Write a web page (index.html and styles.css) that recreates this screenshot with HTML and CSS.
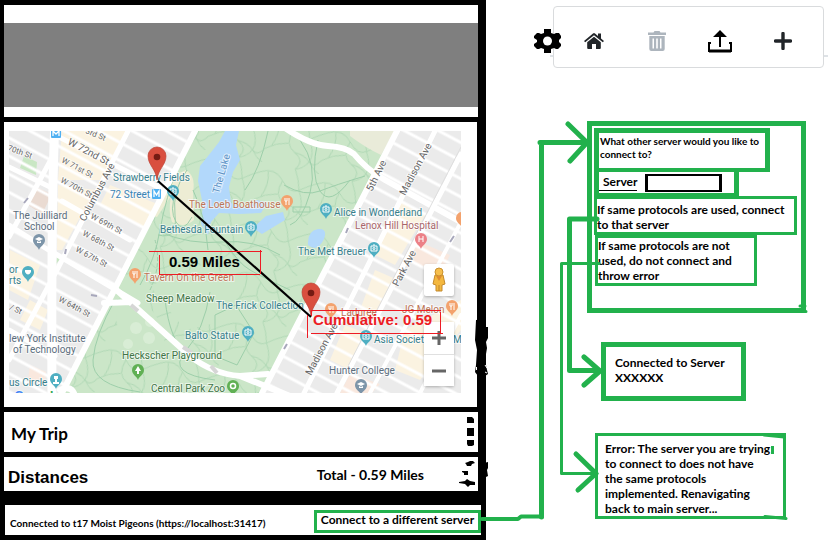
FILE: index.html
```html
<!DOCTYPE html>
<html lang="en">
<head>
<meta charset="utf-8">
<title>Trip planner server flow</title>
<link rel="stylesheet" href="styles.css">
</head>
<body>
<main class="board">
  <section class="phone">
    <header class="banner"></header>

    <div class="map-panel">
      <div class="map">
        <svg class="map-art" viewBox="9 131 452 262" preserveAspectRatio="none" role="img" aria-label="Map of Central Park">
          <defs>
            <pattern id="streets" width="60" height="16" patternUnits="userSpaceOnUse" patternTransform="translate(0 4) rotate(28)">
              <path d="M0 2H60" stroke="#fff" stroke-width="3"/>
            </pattern>
            <pattern id="trails" width="58" height="52" patternUnits="userSpaceOnUse" patternTransform="rotate(12)">
              <path d="M0 10Q14 2 24 14T42 20T58 10M24 14Q18 30 30 36T34 52M34 0Q40 10 42 20Q50 34 46 42T34 52M0 38Q10 30 22 28M30 36Q40 36 46 42T58 38M8 8Q12 20 6 34M46 42Q52 50 58 52" fill="none" stroke="#b0d8b5" stroke-width="1"/>
            </pattern>
            <path id="pin" d="M0 9C-1 5-6 4-6-1A6 6 0 1 1 6-1C6 4 1 5 0 9Z"/>
            <g id="cam" fill="none" stroke="#fff" stroke-width="1"><path d="M-3-2H3V3H-3ZM-1-3H1"/><circle cy=".5" r="1"/></g>
            <path id="fork" d="M-2-4V-1M0-4V-1H-2M-1-1V3M2-4V3" fill="none" stroke="#fff"/>
            <g id="marker">
              <path d="M0 33C-1 22-9 18-9 9A9 9 0 0 1 9 9C9 18 1 22 0 33Z" fill="#d94f3f" stroke="#bd4437" stroke-width=".7"/>
              <circle cy="10" r="3.3" fill="#741b13"/>
            </g>
          </defs>

          <rect x="9" y="131" width="452" height="262" fill="#ebebeb"/>
          <g fill="#fbf3e1">
            <path d="M62 131H126L100 180L58 180ZM58 185L95 190L62 250L57 250ZM110 185L160 205L150 230L100 205ZM30 300L48 310L40 330L20 320ZM10 250L40 265L28 300L9 290ZM400 200L425 215L395 265L375 255ZM375 270L398 280L375 320L358 315ZM345 325L370 335L350 370L330 360ZM405 330L461 300V330L420 380L395 370Z"/>
            <path d="M30 365L46 372L44 386L28 380ZM415 240L450 255L440 275L412 262ZM350 374L380 384L372 393H340Z" fill="#f9e8de"/>
            <path d="M34 186L52 194L42 214L28 205Z" fill="#eadbd2"/>
          </g>
          <path d="M24 156L37 162L36 175L20 168ZM57 256L61 258L56 264Z" fill="#c9e7c4"/>
          <path d="M9 131H461V393H9Z" fill="url(#streets)"/>

          <path d="M195 131H397L262 393H62Z" fill="#cbe6c8"/>
          <path d="M195 131H397L262 393H62Z" fill="url(#trails)"/>
          <path d="M120 298Q160 298 165 345Q155 360 130 350Q110 330 120 298ZM150 286L210 262L240 290L228 320L185 330Z" fill="#cbe6c8"/>
          <g fill="#d8edd5"><circle cx="136" cy="328" r="6"/><circle cx="149" cy="338" r="6"/><circle cx="128" cy="344" r="5"/><circle cx="150" cy="322" r="5"/></g>
          <path d="M350 131H395L381 155Q366 148 350 136Z" fill="#e9ebd9"/>
          <path d="M186 170Q196 176 193 192L194 220Q184 229 172 222Q168 212 171 196L157 217L150 215L168 178Z" fill="#ededd4"/>
          <path d="M225 131H239L236 145L240 160L233 172L229 187L231 203L245 208L257 200L267 203L261 213L239 214L219 213L211 222L208 235L201 224L203 205L198 181L200 166L212 151L219 142ZM253 228L266 216L283 212L285 220L262 234ZM308 245Q307 231 318 229Q328 228 324 239Q317 253 308 245Z" fill="#b2d8fb"/>
          <g fill="none" stroke="#9dcfaa">
            <path d="M180 160Q165 200 160 230T140 285M187 170Q172 190 175 215T158 235M176 193Q169 210 176 222T192 217M193 190Q205 215 208 250M160 232Q190 245 222 242T280 255M268 131Q260 170 245 190M300 140Q318 165 310 193T290 225M318 140Q310 175 320 191T350 180M284 185Q305 197 320 191T365 176M293 207H310V212H293ZM226 243Q238 263 250 270T290 290M115 300Q95 335 93 360T140 392M165 300Q170 340 185 352M210 292Q204 330 185 352T215 380M215 315L236 305L254 333L237 365L215 356Z"/>
            <path d="M191 137L117 288M150 290Q162 265 155 240" stroke-dasharray="4 2"/>
          </g>

          <g fill="none" stroke="#fff" stroke-linecap="round" stroke-linejoin="round">
            <path d="M195 131L62 393M397 131L262 393" stroke-width="6"/>
            <path d="M55 120Q51 210 52 400" stroke-width="9"/>
            <path d="M128 131L58 268L9 360M55 152L9 237M435 131L304 393M461 154L337 393" stroke-width="5"/>
            <path d="M461 222L370 393M461 315L420 393" stroke-width="4"/>
            <path d="M53 134L160 188M9 167L52 188M54 253L138 303M62 201L130 240M9 225L50 251M9 330L55 356" stroke-width="5"/>
            <path d="M285 128Q310 145 328 146T354 154Q366 169 385 180L461 222" stroke-width="6"/>
            <path d="M104 303L133 302M112 286L150 320L190 356Q213 374 240 376L268 374M240 376L290 396M60 390Q70 385 74 393" stroke-width="6"/>
            <path d="M461 147L345 372" stroke="#dedede" stroke-width="1"/>
          </g>
          <path d="M131 305L138 311M183 347L192 353M211 366L217 373" stroke="#d6d6d6" stroke-width="4"/>

          <g class="place" font-size="10">
            <g class="lbl-water">
              <text x="113" y="181">Strawberry Fields</text>
              <text x="160" y="233">Bethesda Fountain</text>
              <text x="334" y="216">Alice in Wonderland</text>
              <text x="298" y="255">The Met Breuer</text>
              <text x="216" y="309">The Frick Collection</text>
              <text x="185" y="339">Balto Statue</text>
              <text x="374" y="343">Asia Societ</text>
              <text x="453" y="343">Mu</text>
              <text x="9" y="273">or</text><text x="9" y="284">rts</text>
              <text x="9" y="386">us Circle</text>
            </g>
            <text class="lbl-metro" x="110" y="198">72 Street</text>
            <text class="lbl-lake" transform="translate(219 194) rotate(-74)">The Lake</text>
            <g class="lbl-food">
              <text x="189" y="208">The Loeb Boathouse</text>
              <text x="144" y="281">Tavern On the Green</text>
              <text x="341" y="316">Ladurée</text>
              <text x="402" y="313">JG Melon</text>
            </g>
            <text class="lbl-health" x="355" y="229">Lenox Hill Hospital</text>
            <g class="lbl-park">
              <text x="146" y="302">Sheep Meadow</text>
              <text x="122" y="359">Heckscher Playground</text>
              <text x="151" y="392">Central Park Zoo</text>
            </g>
            <g class="lbl-school">
              <text x="13" y="219">The Juilliard</text><text x="24" y="230">School</text>
              <text x="9" y="342">lew York Institute</text><text x="13" y="353">of Technology</text>
              <text x="329" y="374">Hunter College</text>
            </g>
            <g class="lbl-street">
              <text transform="translate(67 144) rotate(28)">W 72nd St</text>
              <text transform="translate(85 222) rotate(-62)">Columbus Ave</text>
              <text transform="translate(372 192) rotate(-64)">5th Ave</text>
              <text transform="translate(405 196) rotate(-62)">Madison Ave</text>
              <text transform="translate(398 287) rotate(-62)">Park Ave</text>
              <text transform="translate(311 376) rotate(-62)">Madison Ave</text>
            </g>
            <g class="lbl-street" font-size="8">
              <text transform="translate(85 133) rotate(22)">3rd St</text>
              <text transform="translate(61 162) rotate(28)">W 71st St</text>
              <text transform="translate(60 182) rotate(28)">W 70th St</text>
              <text transform="translate(90 218) rotate(28)">W 69th St</text>
              <text transform="translate(82 235) rotate(28)">W 68th St</text>
              <text transform="translate(75 251) rotate(28)">W 67th St</text>
              <text transform="translate(58 301) rotate(28)">W 64th St</text>
              <text transform="translate(7 150) rotate(20)">70th St</text>
              <text transform="translate(9 309) rotate(25)">/ St</text>
            </g>
            <text class="logo" x="14" y="402" font-size="15"><tspan fill="#4285f4">G</tspan><tspan fill="#ea4335">o</tspan><tspan fill="#fbbc05">o</tspan><tspan fill="#4285f4">g</tspan><tspan fill="#34a853">l</tspan><tspan fill="#ea4335">e</tspan></text>
          </g>

          <g fill="#4fafc2">
            <use href="#pin" x="326" y="210"/><use href="#pin" x="251" y="228"/><use href="#pin" x="374" y="249"/><use href="#pin" x="248" y="333"/><use href="#pin" x="366" y="337"/><use href="#pin" x="28" y="273"/><use href="#pin" x="56" y="380"/><use href="#pin" x="173" y="192"/>
          </g>
          <use href="#cam" x="326" y="209"/><use href="#cam" x="251" y="227"/><use href="#cam" x="374" y="248"/><use href="#cam" x="248" y="332"/><use href="#cam" x="366" y="336"/><use href="#cam" x="173" y="191"/>
          <path d="M25 270H31V272Q28 277 25 272ZM54 376H58V379H57V382H59V384H53V382H55V379H54Z" fill="#fff"/>
          <g fill="#f3a26d"><use href="#pin" x="287" y="202"/><use href="#pin" x="135" y="275"/><use href="#pin" x="331" y="310"/><use href="#pin" x="452" y="307"/><use href="#pin" x="462" y="219"/></g>
          <use href="#fork" x="287" y="202"/><use href="#fork" x="135" y="275"/><use href="#fork" x="331" y="310"/><use href="#fork" x="452" y="307"/>
          <use href="#pin" x="421" y="240" fill="#ec8087"/><path d="M419 236V242M423 236V242M419 239H423" stroke="#fff"/>
          <g fill="#7d95a9"><use href="#pin" x="39" y="241"/><use href="#pin" x="361" y="386"/></g>
          <path d="M35 239L39 237L43 239L39 241ZM37 241L39 242L41 241V243H37ZM357 384L361 382L365 384L361 386ZM359 386L361 387L363 386V388H359Z" fill="#fff"/>
          <g fill="#60b054"><use href="#pin" x="138" y="371"/><use href="#pin" x="233" y="387"/></g>
          <path d="M138 366L141 371H139V374H137V371H135Z" fill="#fff"/>
          <circle cx="233" cy="386" r="2.5" fill="none" stroke="#fff" stroke-width="1.5"/>
          <g fill="#50b1f2"><rect x="152" y="189" width="9" height="10" rx="1"/><rect x="51" y="129" width="10" height="9" rx="1"/></g>
          <path d="M154 197V191L156.500 195L159 191V197M53 136V131L56 134L59 131V136" fill="none" stroke="#fff" stroke-width="1.300"/>
          <path d="M24 203L28 198M65 254L66 249M97 296L91 295M346 233L348 228M284 349L287 344M450 242L454 236" stroke="#a7a7bb" stroke-width="2"/>
        </svg>

        <button class="map-btn pegman" type="button" aria-label="Street View">
          <svg viewBox="0 0 16 26" width="16" height="26"><path d="M4 8H12L14 17L11 18V24H5V18L2 17Z" fill="#f4b83f" stroke="#c58a2c"/><circle cx="8" cy="5" r="4" fill="#f6be4c" stroke="#c9902f"/><path d="M5 9L8 14L11 9Z" fill="#df8d32"/><path d="M8 18V24" stroke="#bd852c"/></svg>
        </button>
        <div class="zoom">
          <button class="map-btn" type="button" aria-label="Zoom in"><svg viewBox="0 0 14 14" width="14" height="14"><path d="M0 7H14M7 0V14" stroke="#666" stroke-width="3"/></svg></button>
          <button class="map-btn" type="button" aria-label="Zoom out"><svg viewBox="0 0 14 14" width="14" height="14"><path d="M0 7H14" stroke="#666" stroke-width="3"/></svg></button>
        </div>

        <svg class="route" viewBox="9 131 452 262" preserveAspectRatio="none">
          <use href="#marker" x="157" y="147"/>
          <use href="#marker" x="311" y="283"/>
          <path d="M158 181L311 317" stroke="#000" stroke-width="2.200"/>
          <path d="M149 251.500H262M260.500 250V274M159 274.500H260M159.500 255V274M307.500 315V338M311 310.500H441M440.500 312V333M311 333.500H443M311.500 310V316" fill="none" stroke="#ed1c24"/>
          <g class="measure" font-size="15"><text x="169" y="267">0.59 Miles</text><text x="313" y="325" fill="#ed1c24">Cumulative: 0.59</text></g>
        </svg>
      </div>
    </div>

    <div class="row trip">
      <h2 class="row-title">My Trip</h2>
      <button class="menu" type="button" aria-label="Trip menu"><svg viewBox="0 0 18 32" width="18" height="32"><path d="M9 1H14L16 3V7H9ZM9 12H16V20H9ZM9 24H16V29L14 30H10L9 28Z"/></svg></button>
    </div>
    <div class="row distances">
      <h2 class="row-title wide">Distances</h2>
      <span class="total">Total - 0.59 Miles</span>
      <button class="menu" type="button" aria-label="Distances menu"><svg viewBox="0 0 18 32" width="18" height="32"><path d="M7 5L10 4L12 3H15L17 5L14 6L13 8H9L8 6ZM4 13H10V17H6V15L4 14ZM1 24L7 23L9 21L12 23L17 24V27L12 27L10 29L7 26L1 25Z"/></svg></button>
    </div>
    <footer class="status">
      <span class="status-text">Connected to t17 Moist Pigeons (https://localhost:31417)</span>
      <button class="connect" type="button">Connect to a different server</button>
    </footer>
  </section>

  <section class="flow">
    <nav class="toolbar" aria-label="Tools">
      <button class="tool gear" type="button" aria-label="Settings"><svg viewBox="0 0 28 26" width="28" height="26"><path d="M10 1H17V5L20 6L22 5H25L27 8V10L25 12V14L27 16V18L24 21H22L20 20L17 21V25H10V21L7 20L5 21H3L0 18V16L3 14V12L0 10V8L3 5H5L7 6L10 5Z"/><circle cx="13.500" cy="13" r="4.500" fill="#fff"/></svg></button>
      <button class="tool" type="button" aria-label="Home"><svg viewBox="0 0 20 18" width="20" height="18" fill="#212529"><path d="M0 9L9 1.500Q10 .7 11 1.500L14 4V1.500H17V6.500L20 9L18.800 10.300L10 3.200L1.200 10.300Z"/><path d="M3.200 10.300L10 4.800L16.800 10.300V16Q16.800 17 15.800 17H12V12H8V17H4.200Q3.200 17 3.200 16Z"/></svg></button>
      <button class="tool" type="button" aria-label="Delete" disabled><svg viewBox="0 0 18 20" width="18" height="20" fill="#adb5bd"><path d="M0 1.500H5.500L6.500 0H11.500L12.500 1.500H18V4H0Z"/><path fill-rule="evenodd" d="M1.300 5H16.700V18Q16.700 20 14.700 20H3.300Q1.300 20 1.300 18ZM4.500 7.500V17.500H6V7.500ZM8.200 7.500V17.500H9.800V7.500ZM12 7.500V17.500H13.500V7.500Z"/></svg></button>
      <button class="tool" type="button" aria-label="Upload"><svg viewBox="0 0 26 24" width="26" height="24"><path d="M13 1L20 8H6ZM12 7H14V18H12Z"/><path d="M4 14H2V22H24V14H22" fill="none" stroke="#000" stroke-width="2"/><path d="M2 22H24" stroke="#000" stroke-width="3"/></svg></button>
      <button class="tool" type="button" aria-label="Add"><svg viewBox="0 0 18 18" width="18" height="18"><path d="M9 1.500V16.500M1.500 9H16.500" stroke="#212529" stroke-width="3.400" stroke-linecap="round"/></svg></button>
    </nav>

    <form class="dialog">
      <p class="question">What other server would you like to connect to?</p>
      <div class="server-row">
        <label class="server-label" for="server">Server</label>
        <input class="server-input" id="server" type="text">
      </div>
      <p class="rule same">If same protocols are used, connect to that server</p>
      <p class="rule differ">If same protocols are not used, do not connect and throw error</p>
    </form>
    <p class="result success">Connected to Server XXXXXX</p>
    <p class="result failure">Error: The server you are trying<br>to connect to does not have<br>the same protocols<br>implemented. Renavigating<br>back to main server...</p>
  </section>

  <svg class="ink" viewBox="0 0 831 553" preserveAspectRatio="none" aria-hidden="true">
    <g fill="none" stroke="#22b14c" stroke-width="5" stroke-linecap="round" stroke-linejoin="round">
      <path d="M482 519H518L521 516.500H542" stroke-width="4"/>
      <path d="M541.500 517V142.500M540 142.500H586M568 124L587 142.500L570 161" />
      <path d="M597 219H569.500V370.500H600M584 357L600 371L584 385"/>
      <path d="M599 263.500H561.500V473.500H597" stroke-width="3"/>
      <path d="M576 454L596 473.500L578 490"/>
      <path d="M764 435L784 437M765 516.500L786 518.500M800 306H805M803 311.500H806" stroke-width="3"/>
      <path d="M772.500 446V454" stroke-width="3" stroke-linecap="butt"/>
    </g>
    <path d="M476 320L485 319V327L488 327V338L486 342L487 348L485 360L487 370L488 374L485 376H478L475 372L476 365L477 350L475 340ZM484 463L488 462V468L487 470L488 476L484 478Z"/>
    <path d="M476.500 367V370M485 365L487 368M485 372L487 373" stroke="#fff"/>
    <path d="M550 56H553M824 56H828" stroke="#dee2e6" stroke-width="2"/>
  </svg>
</main>
</body>
</html>
```
FILE: styles.css
```css
* { box-sizing: border-box; }

body {
  margin: 0;
  background: #fff;
  color: #000;
  font: bold 12px/15px Lato, "Liberation Sans", sans-serif;
}

h2, p { margin: 0; }

button {
  font: inherit;
  color: inherit;
  padding: 0;
  border: 0;
  background: none;
}

.board {
  position: relative;
  display: grid;
  grid-template-columns: minmax(0, 486fr) minmax(0, 345fr);
  align-items: start;
  padding-bottom: 13px;
}

/* Phone mock-up */
.phone {
  display: flex;
  flex-direction: column;
  gap: 5px;
  padding: 5px;
  padding-left: 4px;
  background: #000;
}

.banner {
  height: 112px;
  margin-right: 3px;
  background: #7f7f7f;
  border-top: 18px solid #fff;
  border-bottom: 10px solid #fff;
}

.map-panel {
  margin-right: 4px;
  padding: 9px 16px 14px 5px;
  background: #fff;
}

.map {
  position: relative;
  height: 262px;
}

.map-art,
.route {
  display: block;
  width: 100%;
  height: 100%;
  overflow: hidden;
}

.route {
  position: absolute;
  inset: 0;
  pointer-events: none;
}

.place {
  font-family: Roboto, sans-serif;
  font-weight: 400;
}

.place text {
  paint-order: stroke;
  stroke: #fff;
  stroke-opacity: 0.6;
  stroke-width: 2px;
}

.measure {
  font-family: "Liberation Sans", sans-serif;
  font-weight: 700;
}

.lbl-water { fill: #37808d; }
.lbl-metro { fill: #3a83b5; }
.lbl-lake { fill: #5b8fc4; }
.lbl-food { fill: #bd7558; }
.lbl-health { fill: #a9666b; }
.lbl-park { fill: #417547; }
.lbl-school { fill: #5c6e7d; }
.lbl-street { fill: #666; }
.place .logo { font-weight: 500; }

.map-btn {
  display: grid;
  place-items: center;
  width: 30px;
  height: 32px;
  background: #fff;
}

.pegman {
  position: absolute;
  right: 7px;
  bottom: 97px;
  border-radius: 2px;
  box-shadow: 0 1px 3px #0004;
}

.zoom {
  position: absolute;
  right: 7px;
  bottom: 7px;
  border-radius: 2px;
  box-shadow: 0 1px 3px #0004;
}

.zoom .map-btn + .map-btn { border-top: 1px solid #e0e0e0; }

.row {
  display: flex;
  align-items: center;
  margin-right: 3px;
  padding: 0 2px 0 7px;
  background: #fff;
}

.trip { height: 40px; }

.distances {
  height: 34px;
  padding-left: 4px;
}

.row-title {
  flex: 1;
  font-size: 17px;
  line-height: 20px;
}

.trip .row-title { padding-top: 4px; }

.wide {
  padding-top: 8px;
  font-family: "Liberation Sans", sans-serif;
}

.total {
  margin-right: 34px;
  font-size: 14px;
}

.menu { display: flex; }

.status {
  display: flex;
  align-items: center;
  justify-content: space-between;
  height: 30px;
  margin-top: 9px;
  padding-left: 5px;
  margin-left: 1px;
  background: #fff;
}

.status-text {
  padding-top: 6px;
  font-size: 10px;
  white-space: nowrap;
}

.connect {
  width: 167px;
  height: 23px;
  margin-top: 3px;
  padding-bottom: 4px;
  border: 3px solid #22b14c;
  line-height: 13px;
  white-space: nowrap;
}

/* Toolbar and server flow */
.flow {
  display: flex;
  flex-direction: column;
  padding: 6px 25px 0 101px;
}

.toolbar {
  display: flex;
  align-items: center;
  justify-content: space-around;
  position: relative;
  height: 62px;
  margin: 0 -18px 53px -34px;
  padding: 8px 9px 0 8px;
  border: 1px solid #d9dbdd;
  border-radius: 4px;
}

.tool {
  display: grid;
  place-items: center;
  width: 28px;
  height: 28px;
}

.gear {
  position: absolute;
  left: -20px;
  top: 20px;
}

.dialog {
  height: 192px;
  padding: 2px;
  border: 5px solid #22b14c;
}

.question {
  height: 44px;
  margin-right: 29px;
  padding: 2px 0 0 1px;
  border: 5px solid #22b14c;
  border-bottom-width: 4px;
  font-size: 10px;
  line-height: 13px;
}

.server-row {
  display: flex;
  align-items: flex-start;
  justify-content: space-between;
  height: 24px;
  margin-right: 60px;
  padding: 2px 12px 0 0;
  border: 5px solid #22b14c;
  border-width: 0 5px 3px;
}

.server-label {
  padding-left: 4px;
  border-bottom: 1px solid #000;
  line-height: 16px;
}

.server-input {
  width: 77px;
  height: 18px;
  padding: 0 2px;
  border: 3px solid #000;
  border-width: 2px 3px;
  border-radius: 0;
  background: #fff;
  font: inherit;
}

.rule { border: 3px solid #22b14c; }

.same {
  height: 39px;
  margin-right: 2px;
  padding-top: 3px;
}

.differ {
  height: 51px;
  margin: 0 42px 0 1px;
  padding-right: 14px;
}

.result { border: 3px solid #22b14c; }

.success {
  height: 59px;
  margin: 29px 60px 32px 14px;
  padding: 8px 9px;
  border-width: 5px;
}

.failure {
  height: 86px;
  margin: 0 20px 0 8px;
  padding: 5px 2px 0 7px;
}

.ink {
  position: absolute;
  inset: 0;
  width: 100%;
  height: 100%;
  pointer-events: none;
}
```
